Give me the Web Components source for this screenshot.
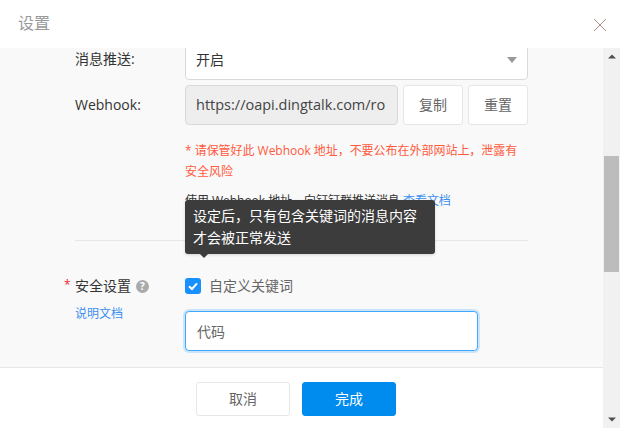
<!DOCTYPE html>
<html lang="zh-CN"><head><meta charset="utf-8">
<style>html,body{margin:0;padding:0;background:#fff}body{font-family:"Open Sans","Noto Sans CJK SC",sans-serif;width:620px;height:428px;overflow:hidden}</style>
</head><body>
<settings-dialog></settings-dialog>
<script>
function def(name, css, html){
  customElements.define(name, class extends HTMLElement{
    constructor(){super();const r=this.attachShadow({mode:'open'});r.innerHTML='<style>'+css+'</style>'+html;}
  });
}
def('dlg-btn',`
:host{display:inline-flex;align-items:center;justify-content:center;box-sizing:border-box;height:40px;width:60px;padding-bottom:2px;background:#fff;border:1px solid #e6e6e6;border-radius:3px;color:#666;font-size:14px}
:host([primary]){background:#008cee;border-color:#008cee;color:#fff}
:host([wide]){width:94px;height:34px}`,`<slot></slot>`);
def('form-row',`
:host{display:flex;align-items:flex-start}
.label{box-sizing:border-box;width:110px;font-size:14px;color:#333;flex:none}
.ctl{flex:1;min-width:0}`,`<div class="label"><slot name="label"></slot></div><div class="ctl"><slot></slot></div>`);
def('scroll-bar',`
:host{display:flex;flex-direction:column;width:17px;flex:none;background:#f1f1f1;align-items:center}
.a{height:17px;flex:none;display:flex;align-items:center;justify-content:center}
.t{flex:none;width:15px;height:116px;margin-top:91px;background:#bcbcbc}
.s{flex:1}`,`<div class="a"><svg width="8" height="5" viewBox="0 0 8 5"><path d="M4 0.5 8 4.5H0z" fill="#505050"/></svg></div><div class="t"></div><div class="s"></div><div class="a"><svg width="8" height="5" viewBox="0 0 8 5"><path d="M0 .5H8L4 4.5z" fill="#505050"/></svg></div>`);
def('dark-tip',`
:host{position:absolute;left:185px;top:200px;box-sizing:border-box;width:250px;height:54px;padding:5px 8px;background:#3c3c3c;border-radius:3px;color:#fff;font-size:14px;line-height:22px;box-shadow:0 1px 3px rgba(0,0,0,.15)}
i{position:absolute;left:15px;bottom:-4px;width:0;height:0;border:4px solid transparent;border-bottom:0;border-top-color:#3c3c3c}`,`<slot></slot><i></i>`);
def('settings-dialog',`
:host{display:flex;flex-direction:column;position:relative;width:620px;height:428px;overflow:hidden;background:#fff}
header{height:48px;flex:none;display:flex;align-items:center;justify-content:space-between;padding:0 13px 0 18px;box-sizing:border-box}
.title{font-size:16px;color:#999;margin-top:-4px}
header svg{margin-top:1px}
.body{flex:1;display:flex;min-height:0}
.col{flex:1;display:flex;flex-direction:column;min-width:0}
.scroll{flex:1;background:#f9f9f9;overflow:hidden;min-height:0}
.inner{margin-top:-8px;padding:0 75px;display:flex;flex-direction:column}
.sel{box-sizing:border-box;height:40px;background:#fff;border:1px solid #d9d9d9;border-radius:4px;display:flex;align-items:center;justify-content:space-between;padding:0 10px 2px;font-size:14px;color:#333}
.sel svg{display:block;margin-top:2px}
.hook{display:flex;gap:5px;margin-top:5px}
.url{box-sizing:border-box;width:213px;height:40px;background:#eee;border:1px solid #d9d9d9;border-radius:4px;padding:0 10px 1px;font-size:14.5px;color:#444;display:flex;align-items:center;overflow:hidden;white-space:nowrap}
.lh{line-height:38px}
.lh2{display:block;margin-top:5px;line-height:40px}
.warn{margin:15px 0 0;font-size:12px;line-height:21px;color:#ff5a3c;letter-spacing:-.03px}
.use{margin:8px 0 0;font-size:12px;line-height:21px;color:#333;letter-spacing:-.03px}
a{color:#3b8ff0;text-decoration:none}
hr{border:0;border-top:1px solid #e6e6e6;margin:29px 0 0;height:0}
.sec{margin-top:37px}
.lab{display:block;line-height:18px;margin-top:-1px}
.star{position:absolute;margin-left:-11px;margin-top:-1px;color:#f5222d;font-size:12px}
.q{display:inline-block;vertical-align:-2px;margin-left:5px}
.doc{display:block;font-size:12px;margin-top:9px;line-height:20px}
.check{display:flex;align-items:center;gap:8px;height:16px;font-size:14px;color:#666}
.check span{margin-top:-2px}
.box{width:16px;height:16px;background:#1890ff;border-radius:3px;flex:none;display:block}
.kw{box-sizing:border-box;height:40px;margin-top:17px;width:293px;background:#fff;border:1px solid #40a9ff;border-radius:4px;box-shadow:0 0 0 2px rgba(24,144,255,.2);padding:0 11px;display:flex;align-items:center;font-size:14px;color:#666}
footer{height:61px;flex:none;box-sizing:border-box;border-top:1px solid #e6e6e6;background:#fff;display:flex;gap:12px;padding:14px 0 0 196px}
`,`
<header><span class="title">设置</span>
<svg width="14" height="14" viewBox="0 0 14 14"><path d="M1 1 13 13M13 1 1 13" stroke="#a98f86" stroke-width="1" fill="none"/></svg></header>
<div class="body"><div class="col">
<div class="scroll"><div class="inner">
<form-row><span slot="label" class="lh">消息推送:</span>
 <div class="sel"><span>开启</span><svg width="10" height="6" viewBox="0 0 10 6"><path d="M0 0H10L5 6z" fill="#999"/></svg></div></form-row>
<form-row><span slot="label" class="lh2">Webhook:</span>
 <div><div class="hook"><div class="url">https://oapi.dingtalk.com/ro</div><dlg-btn>复制</dlg-btn><dlg-btn>重置</dlg-btn></div>
 <p class="warn">* 请保管好此 Webhook 地址，不要公布在外部网站上，泄露有安全风险</p>
 <p class="use">使用 Webhook 地址，向钉钉群推送消息 <a>查看文档</a></p></div></form-row>
<hr>
<form-row class="sec"><span slot="label" class="lab"><span class="star">*</span>安全设置<svg class="q" width="13" height="13" viewBox="0 0 13 13"><circle cx="6.5" cy="6.5" r="6.5" fill="#aaa"/><text x="6.5" y="10" text-anchor="middle" font-size="10" font-weight="700" font-family="Open Sans" fill="#fff">?</text></svg><a class="doc">说明文档</a></span>
 <div><div class="check"><svg class="box" viewBox="0 0 16 16"><path d="M4 8.2 7 11 12 5.3" stroke="#fff" stroke-width="2" fill="none"/></svg><span>自定义关键词</span></div>
 <div class="kw">代码</div></div></form-row>
</div></div>
<footer><dlg-btn wide>取消</dlg-btn><dlg-btn wide primary>完成</dlg-btn></footer>
</div><scroll-bar></scroll-bar></div>
<dark-tip>设定后，只有包含关键词的消息内容<br>才会被正常发送</dark-tip>
`);
</script>
</body></html>
